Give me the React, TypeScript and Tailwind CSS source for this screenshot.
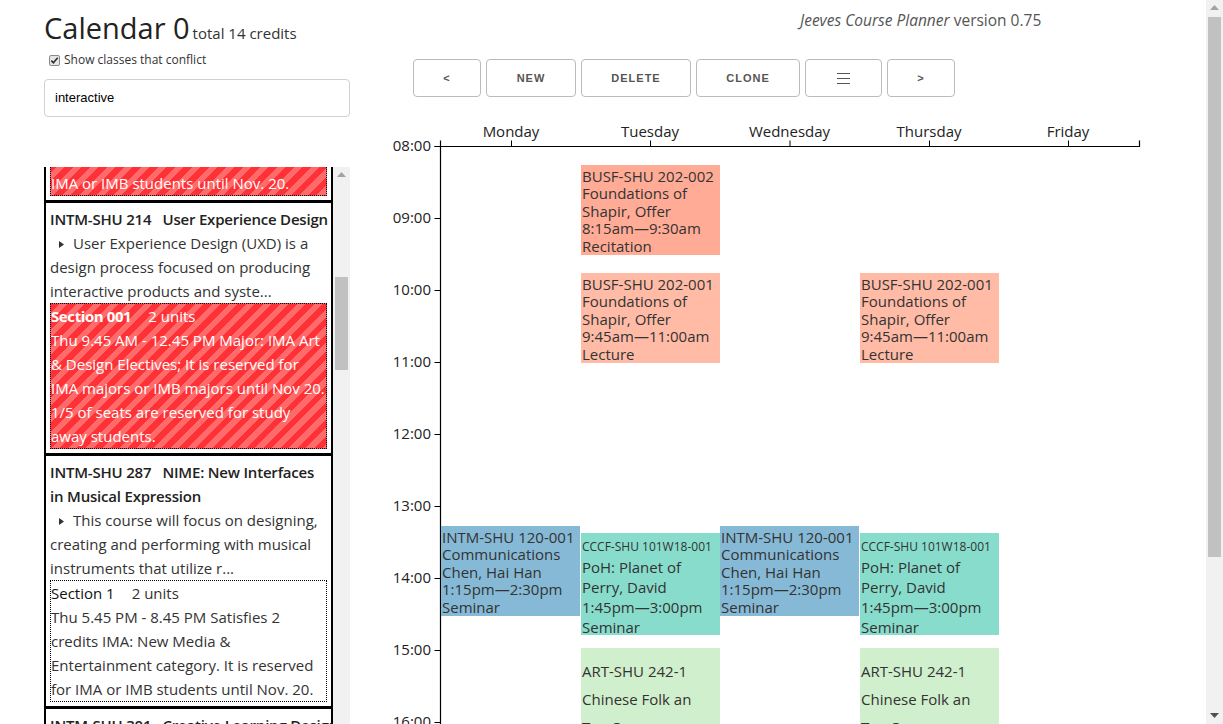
import React from "react";

type CalEvent = {
  left: number;
  top: number;
  height: number;
  bg: string;
  kind: "std" | "small" | "tall";
  lines: string[];
};

const busf2 = ["BUSF-SHU 202-002", "Foundations of", "Shapir, Offer", "8:15am\u20149:30am", "Recitation"];
const busf1 = ["BUSF-SHU 202-001", "Foundations of", "Shapir, Offer", "9:45am\u201411:00am", "Lecture"];
const intm = ["INTM-SHU 120-001", "Communications", "Chen, Hai Han", "1:15pm\u20142:30pm", "Seminar"];
const cccf = ["CCCF-SHU 101W18-001", "PoH: Planet of", "Perry, David", "1:45pm\u20143:00pm", "Seminar"];
const art = ["ART-SHU 242-1", "Chinese Folk an", "Tea Cu..."];

const events: CalEvent[] = [
  { left: 201, top: 55, height: 90, bg: "bg-[#ffab95]", kind: "std", lines: busf2 },
  { left: 201, top: 163, height: 90, bg: "bg-[#ffbba6]", kind: "std", lines: busf1 },
  { left: 480, top: 163, height: 90, bg: "bg-[#ffbba6]", kind: "std", lines: busf1 },
  { left: 61, top: 416, height: 90, bg: "bg-[#86b9d6]", kind: "std", lines: intm },
  { left: 340, top: 416, height: 90, bg: "bg-[#86b9d6]", kind: "std", lines: intm },
  { left: 201, top: 423, height: 102, bg: "bg-[#88dccc]", kind: "small", lines: cccf },
  { left: 480, top: 423, height: 102, bg: "bg-[#88dccc]", kind: "small", lines: cccf },
  { left: 201, top: 538, height: 120, bg: "bg-[#d0efcc]", kind: "tall", lines: art },
  { left: 480, top: 538, height: 120, bg: "bg-[#d0efcc]", kind: "tall", lines: art },
];

const days = [
  { name: "Monday", x: 131 },
  { name: "Tuesday", x: 270 },
  { name: "Wednesday", x: 409.5 },
  { name: "Thursday", x: 549 },
  { name: "Friday", x: 688 },
];

const hours = ["08:00", "09:00", "10:00", "11:00", "12:00", "13:00", "14:00", "15:00", "16:00"];

const stripes =
  "bg-[repeating-linear-gradient(135deg,#fe3236_0px,#fe3236_6px,#ff6a6a_6px,#ff6a6a_12px)]";

const row = "h-[24px] whitespace-nowrap";
const courseTitle = `${row} font-semibold text-[#222] tracking-[-0.2px]`;

function Arrow({ up, color }: { up?: boolean; color: string }) {
  return (
    <svg width="9" height="5" viewBox="0 0 9 5">
      <polygon points={up ? "0,5 9,5 4.5,0" : "0,0 9,0 4.5,5"} fill={color} />
    </svg>
  );
}

function Scrollbar({ thumbTop, thumbHeight, downArrow }: { thumbTop: number; thumbHeight: number; downArrow?: boolean }) {
  return (
    <div className="relative w-[17px] h-full bg-[#f1f1f1] shrink-0">
      <div className="absolute top-[5px] left-[4px]">
        <Arrow up color="#a3a3a3" />
      </div>
      <div
        className="absolute left-[2px] right-[2px] bg-[#c1c1c1]"
        style={{ top: thumbTop, height: thumbHeight }}
      />
      {downArrow && (
        <div className="absolute bottom-[6px] left-[4px]">
          <Arrow color="#505050" />
        </div>
      )}
    </div>
  );
}

function Marker() {
  return (
    <svg width="5" height="7" viewBox="0 0 5 7" className="inline-block ml-[9px] mr-[9px] align-[1px]">
      <polygon points="0,0 5,3.5 0,7" fill="#333" />
    </svg>
  );
}

function Lines({ lines }: { lines: string[] }) {
  return (
    <>
      {lines.map((l, i) => (
        <div key={i} className={row}>
          {l}
        </div>
      ))}
    </>
  );
}

function CourseList() {
  return (
    <div className="flex h-[557px]">
      <div className="w-[289px] overflow-hidden text-[15px] leading-[24px] text-[#333]">
        <div className="mt-[-28px]">
          <div className="border-x-2 border-t-[3px] border-black p-[4px]">
            <div className={`border border-dotted border-black text-white ${stripes}`}>
              <Lines lines={["credits IMA: New Media. It is reserved for", "IMA or IMB students until Nov. 20."]} />
            </div>
          </div>

          <div className="border-x-2 border-t-[3px] border-black p-[4px]">
            <div className={courseTitle}>INTM-SHU 214{"\u00a0\u00a0 "}User Experience Design</div>
            <div className={row}>
              <Marker />
              User Experience Design (UXD) is a
            </div>
            <Lines lines={["design process focused on producing", "interactive products and syste..."]} />
            <div className={`border border-dotted border-black text-white ${stripes}`}>
              <div className={row}>
                <span className="font-bold tracking-[-0.4px]">Section 001</span>
                <span className="ml-[17px]">2 units</span>
              </div>
              <Lines
                lines={[
                  "Thu 9.45 AM - 12.45 PM Major: IMA Art",
                  "& Design Electives; It is reserved for",
                  "IMA majors or IMB majors until Nov 20.",
                  "1/5 of seats are reserved for study",
                  "away students.",
                ]}
              />
            </div>
          </div>

          <div className="border-x-2 border-t-[3px] border-black p-[4px]">
            <div className={courseTitle}>INTM-SHU 287{"\u00a0\u00a0 "}NIME: New Interfaces</div>
            <div className={courseTitle}>in Musical Expression</div>
            <div className={row}>
              <Marker />
              This course will focus on designing,
            </div>
            <Lines lines={["creating and performing with musical", "instruments that utilize r..."]} />
            <div className="border border-dotted border-black">
              <div className={row}>
                <span className="text-[#111]">Section 1</span>
                <span className="ml-[17px]">2 units</span>
              </div>
              <Lines
                lines={[
                  "Thu 5.45 PM - 8.45 PM Satisfies 2",
                  "credits IMA: New Media &",
                  "Entertainment category. It is reserved",
                  "for IMA or IMB students until Nov. 20.",
                ]}
              />
            </div>
          </div>

          <div className="border-x-2 border-t-[3px] border-black p-[4px]">
            <div className={courseTitle}>INTM-SHU 301{"\u00a0\u00a0 "}Creative Learning Design</div>
          </div>
        </div>
      </div>
      <Scrollbar thumbTop={110} thumbHeight={93} />
    </div>
  );
}

function Calendar() {
  return (
    <div className="relative h-[614px] w-[790px]">
      <svg width="790" height="614" className="absolute inset-0" fontFamily="'Open Sans', sans-serif" fontSize="15">
        <path d="M60.5,30.5V36.5H759.5V30.5" fill="none" stroke="#000" strokeWidth="1.2" />
        {days.map((d) => (
          <g key={d.name}>
            <line x1={d.x + 0.5} x2={d.x + 0.5} y1={30.5} y2={36.5} stroke="#000" />
            <text x={d.x} y={27} textAnchor="middle" fill="#222">
              {d.name}
            </text>
          </g>
        ))}
        <path d="M54.5,36.5H60.5V614" fill="none" stroke="#000" strokeWidth="1.2" />
        {hours.map((h, i) => {
          const y = 36.5 + i * 72;
          return (
            <g key={h}>
              <line x1={54.5} x2={60.5} y1={y} y2={y} stroke="#000" />
              <text x={51} y={y} dy="0.32em" textAnchor="end" fill="#222">
                {h}
              </text>
            </g>
          );
        })}
      </svg>
      {events.map((e, i) => (
        <div
          key={i}
          className={`absolute w-[139px] overflow-visible pl-[1px] text-[15px] text-[#333] ${e.bg} ${
            e.kind === "std" ? "pt-[3px] leading-[17.4px]" : e.kind === "small" ? "pt-[4px] leading-[20px]" : "pt-[9px] leading-[28px]"
          }`}
          style={{ left: e.left, top: e.top, height: e.height }}
        >
          {e.lines.map((l, j) => (
            <div key={j} className={`whitespace-nowrap ${e.kind === "small" && j === 0 ? "text-[12px]" : ""}`}>
              {l}
            </div>
          ))}
        </div>
      ))}
    </div>
  );
}

const btn =
  "h-[38px] border border-[#bbb] rounded-[4px] bg-white flex items-center justify-center text-[11px] font-bold tracking-[1px] text-[#555] font-['Liberation_Sans',Arial,sans-serif]";

export default function App() {
  return (
    <div className="flex h-[724px] w-[1223px] overflow-hidden bg-white font-['Open_Sans',sans-serif] text-[#333]">
      <div className="flex flex-1 min-w-0">
        <div className="ml-[44px] w-[306px] shrink-0 flex flex-col">
          <div className="mt-[8px] h-[40px] leading-[40px] whitespace-nowrap text-[#222]">
            <span className="text-[29px]">Calendar 0</span>
            <span className="text-[15px] ml-[3px] text-[#333]">total 14 credits</span>
          </div>
          <div className="flex items-center mt-[5px] ml-[5px] h-[14px]">
            <svg width="11" height="11" viewBox="0 0 11 11">
              <rect x="0.5" y="0.5" width="10" height="10" rx="1.5" fill="#e6e6e6" stroke="#8a8a8a" />
              <path d="M2.3,5.6 L4.4,7.8 L8.7,2.8" fill="none" stroke="#333" strokeWidth="1.7" />
            </svg>
            <span className="ml-[4px] text-[12px] text-[#333]">Show classes that conflict</span>
          </div>
          <div className="mt-[12px] h-[38px] shrink-0 border border-[#d1d1d1] rounded-[4px] px-[10px] flex items-center text-[13px] text-black font-['Liberation_Sans',Arial,sans-serif]">
            interactive
          </div>
          <div className="mt-[50px]">
            <CourseList />
          </div>
        </div>

        <div className="ml-[30px] flex flex-col">
          <div className="pt-[10px] pl-[420px] leading-[20px] text-[15.5px] text-[#555] whitespace-nowrap">
            <span className="italic">Jeeves Course Planner</span> version 0.75
          </div>
          <div className="mt-[29px] ml-[33px] flex gap-[5px]">
            <button className={`${btn} w-[68px]`}>&lt;</button>
            <button className={`${btn} w-[90px]`}>NEW</button>
            <button className={`${btn} w-[110px]`}>DELETE</button>
            <button className={`${btn} w-[104px]`}>CLONE</button>
            <button className={`${btn} w-[77px]`}>
              <svg width="13" height="12" viewBox="0 0 13 12">
                <path d="M0,1.5H13M0,6.5H13M0,11.5H13" stroke="#555" strokeWidth="1" />
              </svg>
            </button>
            <button className={`${btn} w-[68px]`}>&gt;</button>
          </div>
          <div className="mt-[13px]">
            <Calendar />
          </div>
        </div>
      </div>
      <Scrollbar thumbTop={17} thumbHeight={540} downArrow />
    </div>
  );
}
